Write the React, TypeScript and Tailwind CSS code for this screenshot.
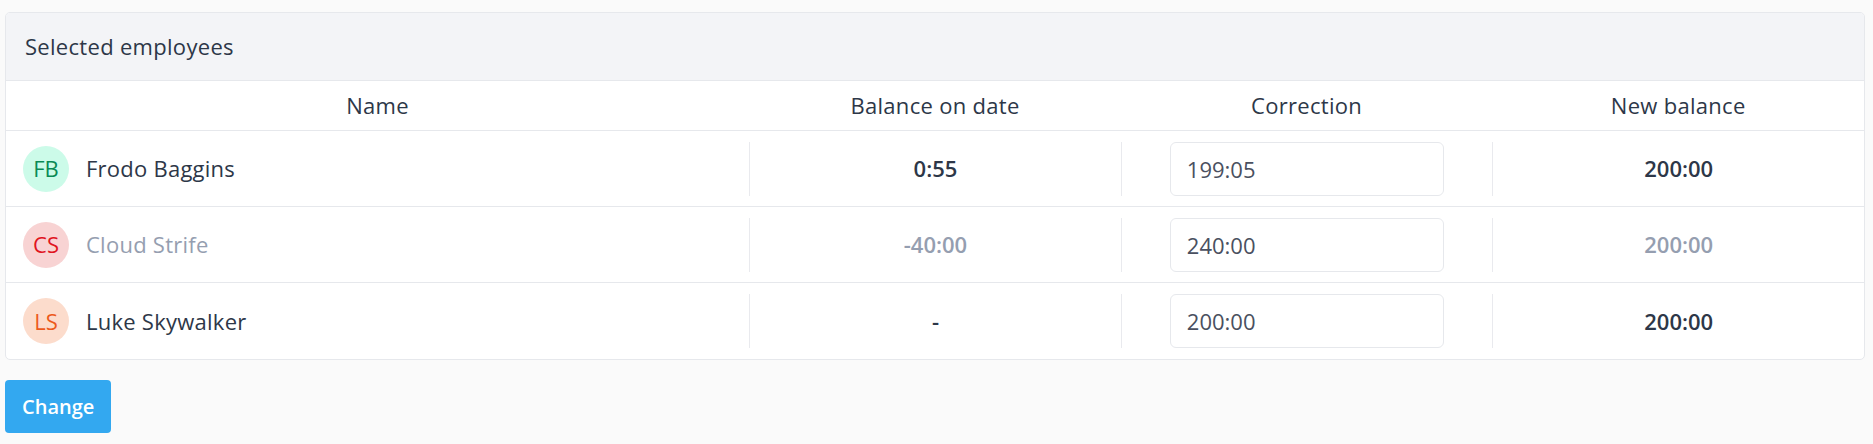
import React from 'react'

type Employee = {
  initials: string
  name: string
  balance: string
  correction: string
  newBalance: string
  avatar: string
  muted?: boolean
}

const employees: Employee[] = [
  {
    initials: 'FB',
    name: 'Frodo Baggins',
    balance: '0:55',
    correction: '199:05',
    newBalance: '200:00',
    avatar: 'bg-[#ccfbe9] text-[#0a8a55]',
  },
  {
    initials: 'CS',
    name: 'Cloud Strife',
    balance: '-40:00',
    correction: '240:00',
    newBalance: '200:00',
    avatar: 'bg-[#f8d3d3] text-[#e0141e]',
    muted: true,
  },
  {
    initials: 'LS',
    name: 'Luke Skywalker',
    balance: '-',
    correction: '200:00',
    newBalance: '200:00',
    avatar: 'bg-[#fcdccc] text-[#ec5a1c]',
  },
]

export default function App() {
  return (
    <div className="min-h-[444px] bg-[#fafafa] pl-[5px] pr-[8px] pt-[12px] font-['Open_Sans',sans-serif]">
      <div className="overflow-hidden rounded-[5px] border border-[#e6e8ec] bg-white">
        <div className="flex h-[68px] items-center border-b border-[#e6e8ec] bg-[#f3f4f7] px-[19px] text-[22px] font-medium tracking-[0.3px] text-[#2d3748]">
          Selected employees
        </div>

        <div className="grid h-[50px] grid-cols-[2fr_1fr_1fr_1fr] items-center border-b border-[#e6e8ec] text-[22px] font-medium tracking-[0.3px] text-[#2d3748]">
          <div className="text-center">Name</div>
          <div className="text-center">Balance on date</div>
          <div className="text-center">Correction</div>
          <div className="text-center">New balance</div>
        </div>

        {employees.map((e, i) => {
          const textColor = e.muted ? 'text-[#959eb0]' : 'text-[#2d3748]'
          return (
            <div
              key={e.initials}
              className={`grid h-[76px] grid-cols-[2fr_1fr_1fr_1fr] items-center text-[22px] ${
                i < employees.length - 1 ? 'border-b border-[#e6e8ec]' : ''
              }`}
            >
              <div className="flex items-center gap-[17px] pl-[17px]">
                <div className={`flex h-[46px] w-[46px] items-center justify-center rounded-full text-[22px] ${e.avatar}`}>
                  {e.initials}
                </div>
                <span className={`font-medium tracking-[0.25px] ${textColor}`}>{e.name}</span>
              </div>
              <div className={`flex h-[54px] items-center justify-center border-l border-[#e9eaee] font-semibold ${textColor}`}>
                {e.balance}
              </div>
              <div className="flex h-[54px] items-center justify-center border-l border-[#e9eaee] px-[48px]">
                <input
                  defaultValue={e.correction}
                  className="h-[54px] w-full rounded-[6px] border border-[#e6e8ec] px-[16px] text-[22px] text-[#4a5060] outline-none"
                />
              </div>
              <div className={`flex h-[54px] items-center justify-center border-l border-[#e9eaee] font-semibold ${textColor}`}>
                {e.newBalance}
              </div>
            </div>
          )
        })}
      </div>

      <button className="mt-[20px] h-[53px] rounded-[4px] bg-[#33a8f0] px-[17px] text-[20px] font-semibold text-white">
        Change
      </button>
    </div>
  )
}
